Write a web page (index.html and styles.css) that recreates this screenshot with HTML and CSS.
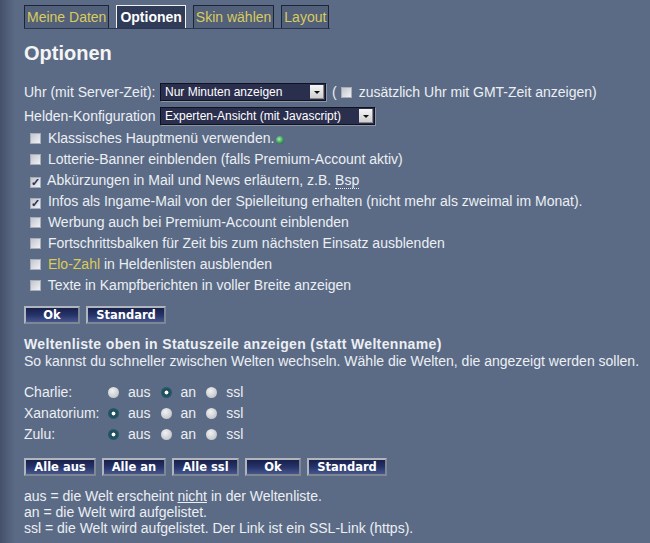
FILE: index.html
```html
<!DOCTYPE html>
<html lang="de">
<head>
    <meta charset="UTF-8">
    <title>Optionen</title>
    <link rel="stylesheet" href="styles.css">
</head>
<body>
    <div class="page">
        <div class="tabs">
            <a class="tab" href="#">Meine Daten</a>
            <a class="tab active" href="#">Optionen</a>
            <a class="tab" href="#">Skin wählen</a>
            <a class="tab" href="#">Layout</a>
        </div>

        <h1>Optionen</h1>

        <form class="options">
            <div class="row">
                <label>Uhr (mit Server-Zeit):</label>
                <span class="select w1">Nur Minuten anzeigen<span class="arrow"></span></span>
                <span class="paren">(</span>
                <input type="checkbox" class="gmt">
                <span>zusätzlich Uhr mit GMT-Zeit anzeigen)</span>
            </div>
            <div class="row">
                <label>Helden-Konfiguration</label>
                <span class="select w2">Experten-Ansicht (mit Javascript)<span class="arrow"></span></span>
            </div>

            <div class="check"><input type="checkbox"> Klassisches Hauptmenü verwenden.<span class="dot"></span></div>
            <div class="check"><input type="checkbox"> Lotterie-Banner einblenden (falls Premium-Account aktiv)</div>
            <div class="check"><input type="checkbox" checked> Abkürzungen in Mail und News erläutern, z.B. <abbr>Bsp</abbr></div>
            <div class="check"><input type="checkbox" checked> Infos als Ingame-Mail von der Spielleitung erhalten (nicht mehr als zweimal im Monat).</div>
            <div class="check"><input type="checkbox"> Werbung auch bei Premium-Account einblenden</div>
            <div class="check"><input type="checkbox"> Fortschrittsbalken für Zeit bis zum nächsten Einsatz ausblenden</div>
            <div class="check"><input type="checkbox"> <a class="elo" href="#">Elo-Zahl</a> in Heldenlisten ausblenden</div>
            <div class="check"><input type="checkbox"> Texte in Kampfberichten in voller Breite anzeigen</div>

            <div class="buttons">
                <button type="button" class="btn ok">Ok</button>
                <button type="button" class="btn std">Standard</button>
            </div>
        </form>

        <div class="worlds">
            <h2>Weltenliste oben in Statuszeile anzeigen (statt Weltenname)</h2>
            <p>So kannst du schneller zwischen Welten wechseln. Wähle die Welten, die angezeigt werden sollen.</p>

            <div class="world-grid">
                <span>Charlie:</span>
                <span class="choice"><input type="radio" name="c">aus<input type="radio" name="c" checked>an<input type="radio" name="c">ssl</span>
                <span>Xanatorium:</span>
                <span class="choice"><input type="radio" name="x" checked>aus<input type="radio" name="x">an<input type="radio" name="x">ssl</span>
                <span>Zulu:</span>
                <span class="choice"><input type="radio" name="z" checked>aus<input type="radio" name="z">an<input type="radio" name="z">ssl</span>
            </div>

            <div class="buttons">
                <button type="button" class="btn all-aus">Alle aus</button>
                <button type="button" class="btn all-an">Alle an</button>
                <button type="button" class="btn all-ssl">Alle ssl</button>
                <button type="button" class="btn ok">Ok</button>
                <button type="button" class="btn std">Standard</button>
            </div>

            <p class="legend">
                aus = die Welt erscheint <u>nicht</u> in der Weltenliste.<br>
                an = die Welt wird aufgelistet.<br>
                ssl = die Welt wird aufgelistet. Der Link ist ein SSL-Link (https).
            </p>
        </div>
    </div>
</body>
</html>
```

FILE: styles.css
```css
html, body {
    height: 100%;
}

body {
    margin: 0;
    font-family: "Liberation Sans", Arial, sans-serif;
    font-size: 14px;
    color: #eceff4;
    background: linear-gradient(to right, #44506a 0, #53617b 9px, #5b6b85 15px) #5b6b85;
}

.page {
    padding: 5px 0 0 24px;
}

/* tabs */
.tabs {
    display: flex;
    gap: 7px;
    width: 306px;
    border-bottom: 1px solid #2b3650;
}

.tab {
    display: block;
    height: 22px;
    line-height: 22px;
    padding: 0 2px;
    font-size: 14px;
    color: #d9cb5e;
    text-decoration: none;
    background: #52607a;
    border: 1px solid #1c2438;
    border-bottom: none;
}

.tab.active {
    color: #fff;
    font-weight: bold;
    background: #2f3b57;
    border-color: #f2f2f2;
    padding: 0 3px;
}

h1 {
    margin: 12px 0 15px;
    font-size: 20px;
    line-height: 24px;
    color: #f4f4f4;
}

/* first form */
.row {
    display: flex;
    align-items: center;
    height: 24px;
}

.row label {
    width: 136px;
    white-space: nowrap;
}

.select {
    position: relative;
    display: inline-block;
    height: 16px;
    line-height: 16px;
    padding-left: 4px;
    font-size: 12px;
    color: #fff;
    background: #2b2f4e;
    border: 1px solid #10131f;
    box-shadow: 1px 1px 0 #8d95a5;
}

.select.w1 {
    width: 160px;
}

.select.w2 {
    width: 209px;
}

.arrow {
    position: absolute;
    right: 1px;
    top: 1px;
    width: 14px;
    height: 14px;
    background: linear-gradient(#f6f6f6, #cdcdcd);
    box-shadow: inset -1px -1px 0 #8a8a8a;
}

.arrow::after {
    content: "";
    position: absolute;
    left: 4px;
    top: 6px;
    border-left: 3px solid transparent;
    border-right: 3px solid transparent;
    border-top: 3px solid #111;
}

.paren {
    margin-left: 6px;
}

input[type="checkbox"] {
    appearance: none;
    width: 11px;
    height: 11px;
    margin: 0;
    background: linear-gradient(135deg, #c2c6ce, #f0f1f4);
    border: 1px solid #a8adb8;
    box-sizing: border-box;
    vertical-align: -1px;
}

input[type="checkbox"]:checked::after {
    content: "✓";
    display: block;
    font-size: 11px;
    line-height: 9px;
    font-weight: bold;
    color: #27305a;
    text-align: center;
}

.gmt {
    margin: 0 7px 0 4px !important;
}

.check {
    height: 21px;
    line-height: 21px;
    padding-left: 6px;
}

.check input {
    margin-right: 3px;
}

.dot {
    display: inline-block;
    width: 8px;
    height: 8px;
    margin-left: 2px;
    border-radius: 50%;
    background: radial-gradient(circle at 40% 40%, #a8eeb0, #3a9a58 55%, #22405a);
    vertical-align: -1px;
}

abbr {
    text-decoration: none;
    border-bottom: 1px dotted #eceff4;
}

.elo {
    color: #dccb55;
    text-decoration: none;
}

/* buttons */
.buttons {
    display: flex;
    gap: 6px;
    margin-top: 10px;
}

.btn {
    height: 18px;
    padding: 0;
    font-family: "DejaVu Sans", Verdana, sans-serif;
    font-size: 11.5px;
    font-weight: bold;
    color: #fff;
    text-align: center;
    background: linear-gradient(#18204a, #26336a 50%, #46578c);
    border: 2px solid;
    border-color: #b0b5be #7f8794 #7f8794 #b0b5be;
    cursor: pointer;
}

.btn.ok {
    width: 56px;
}

.btn.std {
    width: 80px;
}

.btn.all-aus {
    width: 72px;
}

.btn.all-an {
    width: 64px;
}

.btn.all-ssl {
    width: 67px;
}

/* worlds */
.worlds {
    margin-top: 12px;
}

h2 {
    margin: 0;
    font-size: 14px;
    line-height: 17px;
    letter-spacing: 0.35px;
}

.worlds p {
    margin: 0;
    line-height: 17px;
}

.world-grid {
    display: grid;
    grid-template-columns: 84px auto;
    width: 260px;
    margin: 12px 0 0;
    line-height: 21px;
}

.choice input {
    margin: 0 9px 0 10px;
}

.choice input:first-child {
    margin-left: 0;
}

input[type="radio"] {
    appearance: none;
    width: 11px;
    height: 11px;
    border-radius: 50%;
    background: radial-gradient(circle at 40% 35%, #f2f2f2, #b3b7be);
    vertical-align: -1px;
}

input[type="radio"]:checked {
    background: radial-gradient(circle, #ffffff 0 1.6px, #1d4a5a 2.3px, #2e6676);
}

.worlds .buttons {
    margin-top: 13px;
}

.worlds .legend {
    margin-top: 12px;
    line-height: 16px;
}
```
